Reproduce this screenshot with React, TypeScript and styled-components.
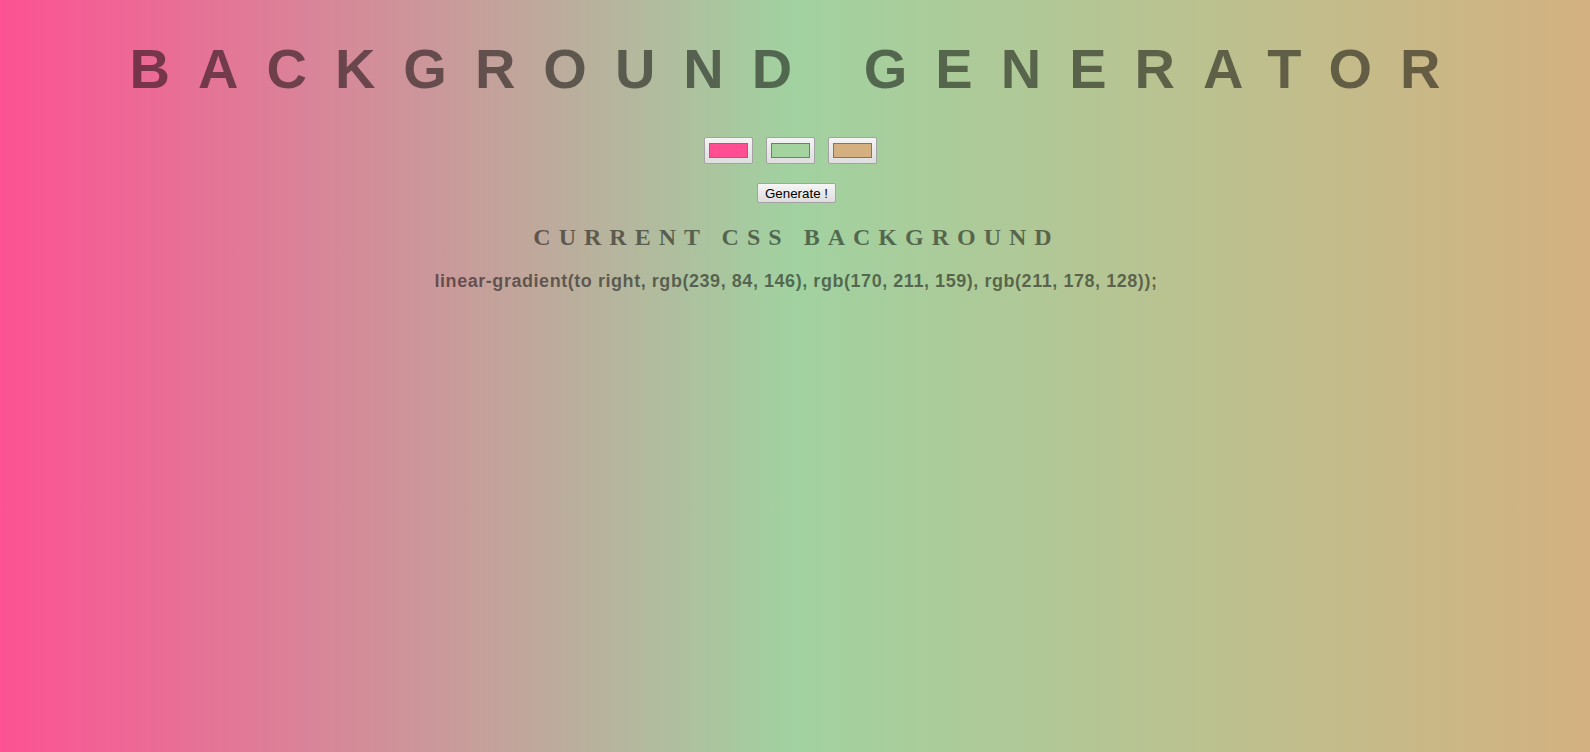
import React from "react";
import styled, { createGlobalStyle } from "styled-components";

const Global = createGlobalStyle`
  html, body { margin: 0; padding: 0; }
  body {
    min-height: 752px;
    font-family: "Liberation Sans", Arial, sans-serif;
    font-size: 16px;
    color: rgba(0, 0, 0, 0.5);
    text-align: center;
    letter-spacing: 8px;
    background: linear-gradient(to right, rgb(253, 82, 147), rgb(161, 210, 160), rgb(212, 177, 128));
  }
`;

const Page = styled.main`
  display: flex;
  flex-direction: column;
  align-items: center;
  padding: 37px 8px 0;
`;

const Title = styled.h1`
  box-sizing: border-box;
  margin: 0;
  width: 100%;
  padding-left: 8px;
  font-family: "Liberation Sans", Arial, sans-serif;
  font-weight: 700;
  font-size: 56px;
  line-height: 64px;
  letter-spacing: 28px;
  text-transform: uppercase;
  color: rgba(0, 0, 0, 0.5);
`;

const Swatches = styled.div`
  display: flex;
  gap: 13px;
  margin: 36px 9px 0 0;
`;

const Swatch = styled.div<{ $c: string }>`
  box-sizing: border-box;
  width: 49px;
  height: 27px;
  padding: 5px 4px;
  border: 1px solid #a3a3a3;
  border-radius: 2px;
  background: linear-gradient(#f4f4f4, #dedede);
  display: flex;
  &::after {
    content: "";
    flex: 1;
    background: ${(p) => p.$c};
    border: 1px solid #777;
  }
`;

const Button = styled.button`
  margin: 19px 0 0 3px;
  height: 20px;
  padding: 0 7px;
  font-family: "Liberation Sans", Arial, sans-serif;
  font-size: 13.33px;
  letter-spacing: normal;
  color: #000;
  border: 1px solid #a3a3a3;
  border-radius: 2px;
  background: linear-gradient(#f6f6f6, #dddddd);
`;

const Subtitle = styled.h2`
  margin: 20px 0 0;
  padding-left: 3px;
  font-family: "Liberation Serif", "Times New Roman", serif;
  font-weight: 700;
  font-size: 24px;
  line-height: 28px;
  text-transform: uppercase;
  color: rgba(0, 0, 0, 0.5);
`;

const Code = styled.h3`
  margin: 19px 0 0;
  padding-left: 2px;
  font-family: "Liberation Sans", Arial, sans-serif;
  font-weight: 700;
  font-size: 18px;
  line-height: 22px;
  letter-spacing: 0.55px;
  color: rgba(0, 0, 0, 0.5);
`;

export default function App() {
  return (
    <>
      <Global />
      <Page>
        <Title>Background Generator</Title>
        <Swatches>
          <Swatch $c="#ff4f92" />
          <Swatch $c="#a4d3a0" />
          <Swatch $c="#d4b081" />
        </Swatches>
        <Button>Generate !</Button>
        <Subtitle>Current CSS Background</Subtitle>
        <Code>linear-gradient(to right, rgb(239, 84, 146), rgb(170, 211, 159), rgb(211, 178, 128));</Code>
      </Page>
    </>
  );
}
